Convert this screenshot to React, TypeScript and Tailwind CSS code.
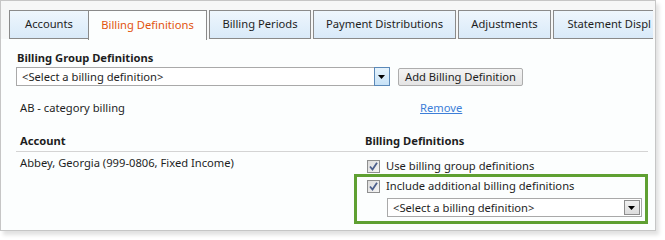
import React from 'react';

const tabs = [
  { label: 'Accounts', w: 'w-[80px]' },
  { label: 'Billing Definitions', w: 'w-[119px]', active: true },
  { label: 'Billing Periods', w: 'w-[102px]' },
  { label: 'Payment Distributions', w: 'w-[143px]' },
  { label: 'Adjustments', w: 'w-[93px]' },
  { label: 'Statement Displ', w: 'w-[100px]', cut: true },
];

function Arrow() {
  return (
    <svg width="8" height="4" viewBox="0 0 8 4">
      <path d="M0 0 H7 L3.5 4 Z" fill="#000" />
    </svg>
  );
}

function Select({ className, hot }: { className: string; hot?: boolean }) {
  return (
    <div className={`flex items-center border border-[#a9a9a9] bg-white h-[19px] ${className}`}>
      <span className="flex-1 pl-[5px] leading-[17px] text-[#1e1e1e]">&lt;Select a billing definition&gt;</span>
      {hot ? (
        <div className="w-[16px] h-[19px] -mr-px -my-px border border-[#5b89b8] bg-gradient-to-b from-[#e6f3fc] to-[#c7e2f7] flex items-center justify-center">
          <Arrow />
        </div>
      ) : (
        <div className="w-[16px] h-[15px] mr-px border border-[#8d8d8d] bg-gradient-to-b from-[#f0f0f0] to-[#dcdcdc] flex items-center justify-center">
          <Arrow />
        </div>
      )}
    </div>
  );
}

function Check() {
  return (
    <div className="w-[13px] h-[13px] border border-[#8e8f8f] bg-gradient-to-br from-[#dcdcdc] to-[#f5f5f5] flex items-center justify-center">
      <svg width="9" height="9" viewBox="0 0 9 9">
        <path d="M1 4.5 L3.5 7.5 L8 0.8" stroke="#4c5f8c" strokeWidth="1.8" fill="none" />
      </svg>
    </div>
  );
}

export default function App() {
  return (
    <div className="w-[665px] h-[240px] bg-white font-['Noto_Sans',sans-serif] text-[11.2px] text-[#1e1e1e]">
      <div className="w-[656px] h-[231px] border border-[#c6c6c6] bg-[#fcfefe] overflow-hidden shadow-[3px_4px_4px_rgba(0,0,0,0.12)]">
        <div className="h-[38px] bg-[#f6f7f7] pt-[9px] pl-[8px] flex items-end">
          <div className="flex gap-[2px] items-end">
            {tabs.map((t) => (
              <div
                key={t.label}
                className={`${t.w} shrink-0 h-[29px] border border-[#8a8a8a] flex items-center whitespace-nowrap ${
                  t.cut ? 'justify-end pr-[2px] border-r-0' : 'justify-center'
                } ${
                  t.active
                    ? 'bg-[#fcfefe] border-b-0 text-[#e2540f] -ml-[3px] h-[30px] -mb-px'
                    : 'bg-gradient-to-b from-[#eef6fd] to-[#d9eaf9] text-[#1e1e1e]'
                }`}
              >
                {t.label}
              </div>
            ))}
          </div>
        </div>
        <div className="pl-[15px] pr-[7px]">
          <div className="font-bold pt-[11px] pl-px leading-[16px]">Billing Group Definitions</div>
          <div className="flex items-center mt-px">
            <Select className="w-[374px]" hot />
            <button className="ml-[8px] h-[18px] px-[6px] border border-[#adadad] rounded-[2px] bg-gradient-to-b from-[#f4f4f4] to-[#e4e4e4] leading-[16px] text-[#1e1e1e]">
              Add Billing Definition
            </button>
          </div>
          <div className="flex mt-[14px] leading-[16px]">
            <span className="w-[404px] pl-[4px]">AB - category billing</span>
            <span className="text-[#3d7fd8] underline">Remove</span>
          </div>
          <div className="flex mt-[17px] leading-[16px] font-bold border-b border-[#d4d4d4] pb-[2px]">
            <span className="w-[349px] pl-[4px]">Account</span>
            <span>Billing Definitions</span>
          </div>
          <div className="flex">
            <span className="w-[341px] pl-[4px] pt-[3px] leading-[16px]">Abbey, Georgia (999-0806, Fixed Income)</span>
            <div className="flex flex-col">
              <div className="flex items-center gap-[6px] pl-[13px] pt-[7px] leading-[14px]">
                <Check />
                <span>Use billing group definitions</span>
              </div>
              <div className="w-[294px] h-[50px] border-[3px] border-[#5fa032] mt-[1px] pl-[10px] pt-[1px]">
                <div className="flex items-center gap-[6px] leading-[16px]">
                  <Check />
                  <span>Include additional billing definitions</span>
                </div>
                <Select className="w-[255px] ml-[20px] mt-[4px]" />
              </div>
            </div>
          </div>
        </div>
      </div>
    </div>
  );
}
